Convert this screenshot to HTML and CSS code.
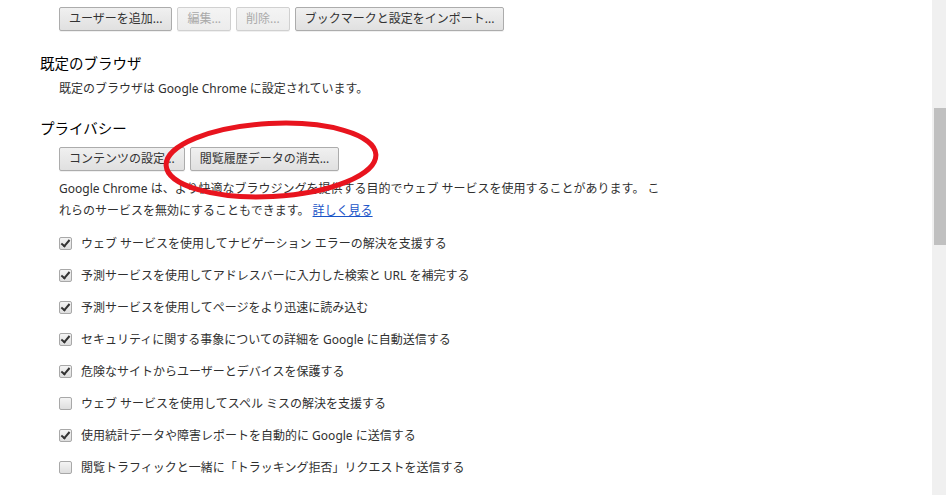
FILE: index.html
```
<!DOCTYPE html>
<html lang="ja">
<head>
    <meta charset="UTF-8">
    <meta name="viewport" content="width=device-width, initial-scale=1.0">
    <title>設定</title>
    <link rel="stylesheet" href="styles.css">
</head>
<body>
    <div class="page">
        <div class="content">
            <div class="buttonRow topRow">
                <button class="btn">ユーザーを追加...</button>
                <button class="btn" disabled>編集...</button>
                <button class="btn" disabled>削除...</button>
                <button class="btn">ブックマークと設定をインポート...</button>
            </div>

            <h3 class="sectionTitle">既定のブラウザ</h3>
            <div class="sectionBody">
                <p class="note">既定のブラウザは Google Chrome に設定されています。</p>
            </div>

            <h3 class="sectionTitle second">プライバシー</h3>
            <div class="sectionBody privacy">
                <div class="buttonRow">
                    <button class="btn">コンテンツの設定...</button>
                    <button class="btn">閲覧履歴データの消去...</button>
                </div>
                <p class="desc">Google Chrome は、より快適なブラウジングを提供する目的でウェブ サービスを使用することがあります。 これらのサービスを無効にすることもできます。 <a href="#">詳しく見る</a></p>

                <ul class="options">
                    <li><span class="box checked"></span>ウェブ サービスを使用してナビゲーション エラーの解決を支援する</li>
                    <li><span class="box checked"></span>予測サービスを使用してアドレスバーに入力した検索と URL を補完する</li>
                    <li><span class="box checked"></span>予測サービスを使用してページをより迅速に読み込む</li>
                    <li><span class="box checked"></span>セキュリティに関する事象についての詳細を Google に自動送信する</li>
                    <li><span class="box checked"></span>危険なサイトからユーザーとデバイスを保護する</li>
                    <li><span class="box"></span>ウェブ サービスを使用してスペル ミスの解決を支援する</li>
                    <li><span class="box checked"></span>使用統計データや障害レポートを自動的に Google に送信する</li>
                    <li><span class="box"></span>閲覧トラフィックと一緒に「トラッキング拒否」リクエストを送信する</li>
                </ul>

                <!-- 手書きの赤丸 -->
                <svg class="circleMark" width="230" height="92" viewBox="0 0 230 92">
                    <ellipse cx="115" cy="46" rx="105" ry="36.5" fill="none" stroke="#e8141e" stroke-width="5" transform="rotate(-3 115 46)"/>
                </svg>
            </div>
        </div>
        <div class="scrollbar">
            <div class="thumb"></div>
        </div>
    </div>
</body>
</html>
```

FILE: styles.css
```
html, body {
    height: 100%;
}

body {
    margin: 0;
    padding: 0;
    background-color: #fff;
    color: #303030;
    font-family: "Noto Sans", "Noto Sans CJK JP", sans-serif;
    font-size: 12px;
    overflow: hidden;
}

.page {
    display: flex;
    height: 100%;
}

.content {
    flex: 1;
    padding: 7px 0 0 40px;
}

.buttonRow {
    display: flex;
    gap: 5px;
}

.btn {
    height: 24px;
    padding: 0 9px;
    font-family: inherit;
    font-size: 12px;
    color: #333;
    background: linear-gradient(#f0f0f0, #e0e0e0);
    border: 1px solid #acacac;
    border-radius: 2px;
    box-shadow: 0 1px 0 rgba(0, 0, 0, 0.06);
    line-height: 22px;
}

.btn:disabled {
    color: #aaa;
    border-color: #d0d0d0;
    background: linear-gradient(#f4f4f4, #ececec);
}

.topRow {
    margin-left: 19px;
}

.sectionTitle {
    margin: 22px 0 0;
    font-size: 14.5px;
    font-weight: normal;
    line-height: 20px;
    color: #000;
}

.sectionTitle.second {
    margin-top: 19px;
}

.sectionBody {
    padding-left: 19px;
}

.note {
    margin: 6px 0 0;
    line-height: 20px;
}

.privacy {
    position: relative;
    margin-top: 9px;
}

.desc {
    width: 612px;
    margin: 7px 0 0;
    line-height: 22px;
}

.desc a {
    color: #1a55c8;
}

.options {
    list-style: none;
    margin: 5px 0 0;
    padding: 0;
}

.options li {
    display: flex;
    align-items: center;
    height: 32px;
}

.box {
    width: 11px;
    height: 11px;
    margin-right: 9px;
    border: 1px solid #a8a8a8;
    border-radius: 2px;
    background: linear-gradient(#f4f4f4, #dedede);
    position: relative;
}

.box.checked::after {
    content: "";
    position: absolute;
    left: 3px;
    top: 0px;
    width: 3px;
    height: 7px;
    border-right: 2px solid #333;
    border-bottom: 2px solid #333;
    transform: rotate(40deg);
}

.circleMark {
    position: absolute;
    left: 116px;
    top: -33px;
}

.scrollbar {
    width: 14px;
    background-color: #f0f0f0;
    padding-top: 108px;
    box-sizing: border-box;
}

.thumb {
    height: 137px;
    margin-left: 2px;
    background-color: #c0c0c0;
}
```
